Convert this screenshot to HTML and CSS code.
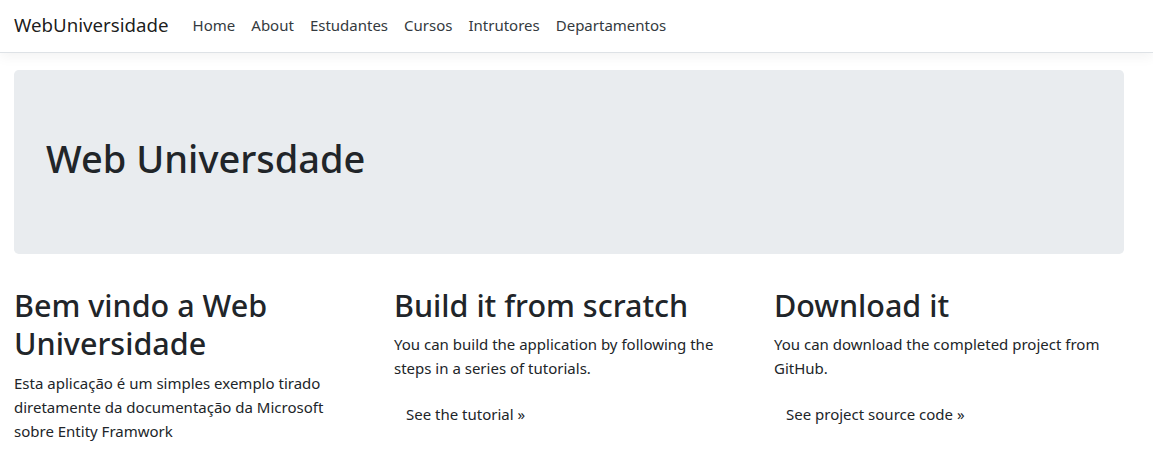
FILE: index.html
```html
<!DOCTYPE html>
<html lang="pt">
<head>
<meta charset="utf-8">
<title>WebUniversidade</title>
<link rel="stylesheet" href="styles.css">
</head>
<body>
<header class="navbar">
  <div class="nav-inner">
    <a class="brand" href="#">WebUniversidade</a>
    <ul class="nav">
      <li><a class="nav-link" href="#">Home</a></li>
      <li><a class="nav-link" href="#">About</a></li>
      <li><a class="nav-link" href="#">Estudantes</a></li>
      <li><a class="nav-link" href="#">Cursos</a></li>
      <li><a class="nav-link" href="#">Intrutores</a></li>
      <li><a class="nav-link" href="#">Departamentos</a></li>
    </ul>
  </div>
</header>
<main class="container">
  <section class="jumbotron">
    <h1>Web Universdade</h1>
  </section>
  <div class="row">
    <div class="col">
      <h2>Bem vindo a Web Universidade</h2>
      <p>Esta aplicação é um simples exemplo tirado diretamente da documentação da Microsoft sobre Entity Framwork</p>
    </div>
    <div class="col">
      <h2>Build it from scratch</h2>
      <p>You can build the application by following the steps in a series of tutorials.</p>
      <p><a class="btn" href="#">See the tutorial &raquo;</a></p>
    </div>
    <div class="col">
      <h2>Download it</h2>
      <p>You can download the completed project from GitHub.</p>
      <p><a class="btn" href="#">See project source code &raquo;</a></p>
    </div>
  </div>
</main>
</body>
</html>
```
FILE: styles.css
```css
* { box-sizing: border-box; }
html, body { margin: 0; }
body {
  font-family: "Noto Sans", "Open Sans", sans-serif;
  font-size: 15px;
  line-height: 24px;
  color: #212529;
  background: #fff;
  overflow: hidden;
}
a { text-decoration: none; }
.navbar {
  height: 53px;
  background: #fff;
  border-bottom: 1px solid #dee2e6;
  box-shadow: 0 4px 12px rgba(0,0,0,.05);
  margin-bottom: 17px;
}
.nav-inner {
  height: 52px;
  padding: 0 14px 2px;
  display: flex;
  align-items: center;
}
.brand {
  font-size: 18.7px;
  color: rgba(0,0,0,.9);
  margin-right: 16px;
  line-height: 30px;
}
.nav {
  display: flex;
  list-style: none;
  margin: 0;
  padding: 0;
}
.nav-link {
  display: block;
  padding: 8px;
  color: #343a40;
  font-size: 15px;
}
.container {
  width: 1110px;
  margin-left: 14px;
}
.jumbotron {
  background: #e9ecef;
  border-radius: 4.8px;
  padding: 64px 32px;
  margin-bottom: 32px;
}
h1, h2 {
  font-weight: 500;
  margin: 0 0 8px;
}
h1 { font-size: 38px; line-height: 48px; }
h2 { font-size: 30.5px; line-height: 38.4px; }
p { margin: 0 0 16px; }
.row {
  display: grid;
  grid-template-columns: repeat(3, 380px);
  margin-left: -15px;
}
.col { padding: 0 15px; }
.btn {
  display: inline-block;
  padding: 6px 12px;
  color: #212529;
}
```
